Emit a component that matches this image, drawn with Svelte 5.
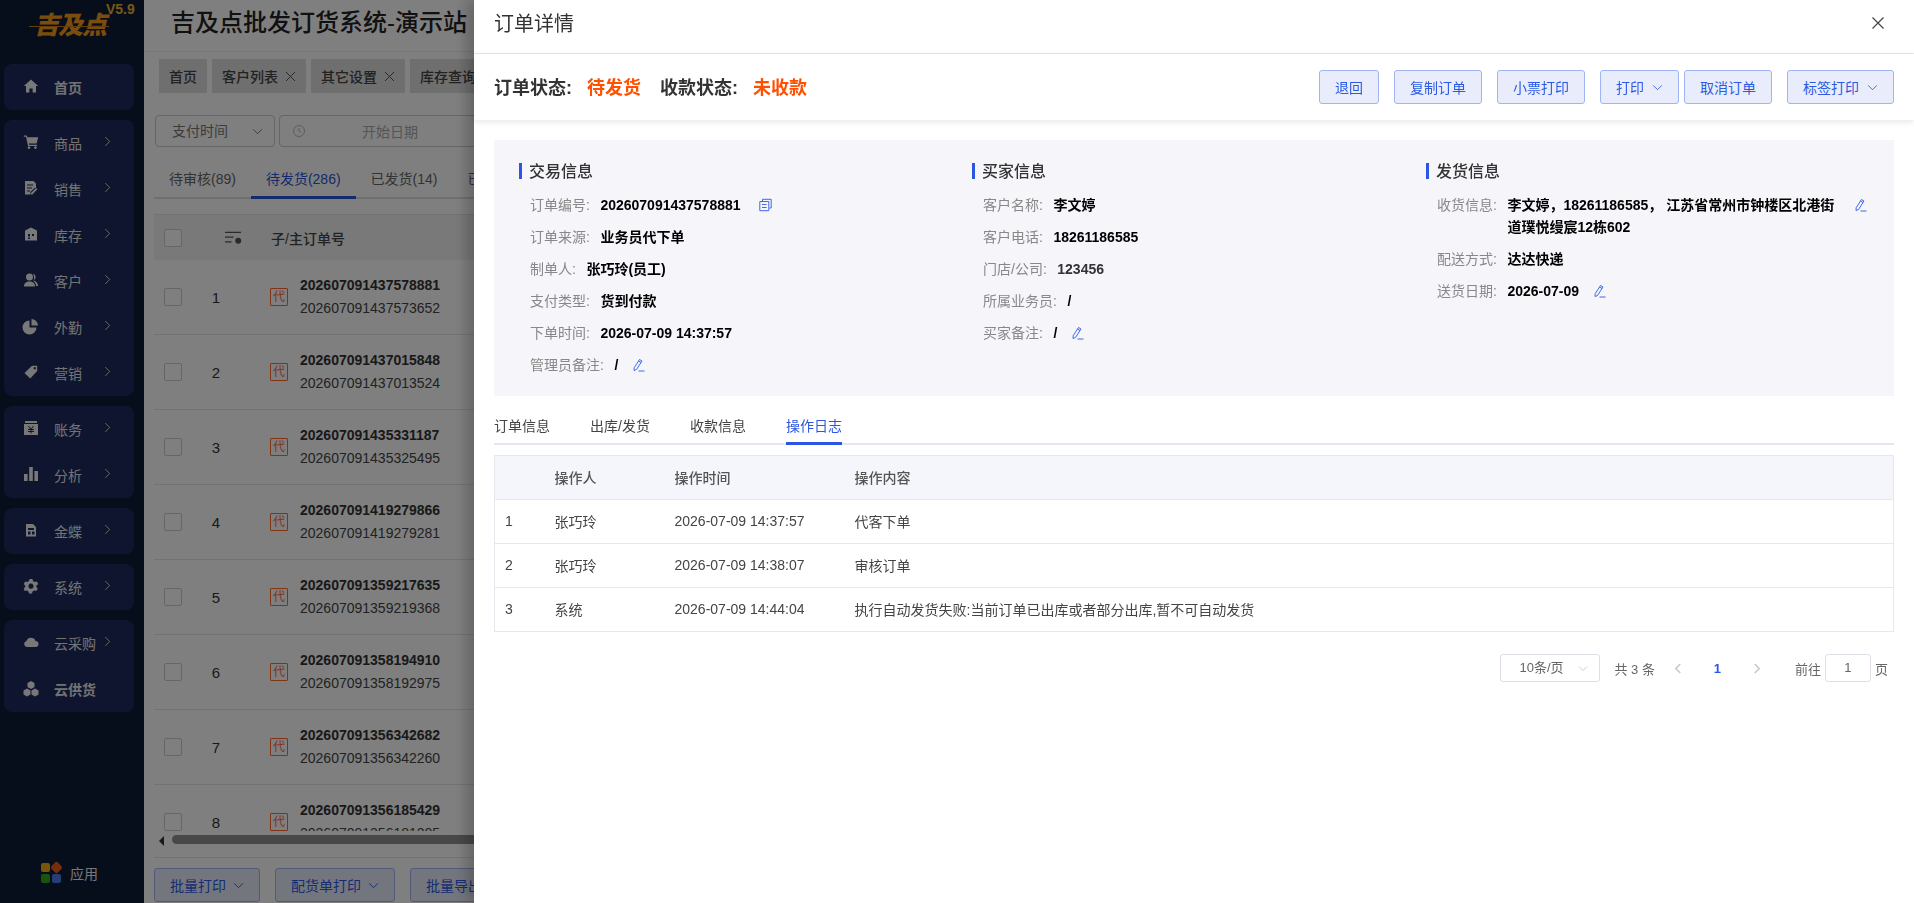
<script>
	const icons = {
		home: 'M8 1.500 15.200 8H13v6.500H9.600v-4H6.400v4H3V8H.8Z',
		cart: 'M.8 1.500h3l.5 1.800h10.900l-1.500 6.200H5.800l.3 1.300h8v1.200H5L3 2.700H.8Z M6 12.200a1.400 1.400 0 1 0 .01 0Z M12.400 12.200a1.400 1.400 0 1 0 .01 0Z',
		doc: 'M2 1h8.500L13 3.500V8h-1.500L7.500 12v2.500H2Z M4 4.500v1h6v-1Z M4 7.500v1h5v-1Z M4 10.500v1h3v-1Z M14.500 9 9.500 14.500h-1.500v-1.500l5-5Z',
		store: 'M8 1.500 14 4.500v10H2v-10Z M5 8v2.500h2V8Z M9 8v2h2V8Z M5 11.500V13h2v-1.500Z',
		users: 'M6.500 1.500a3.500 3.500 0 0 1 0 7 3.500 3.500 0 0 1 0-7Z M1 14.500c0-3.300 2.300-5 5.500-5s5.500 1.700 5.500 5Z M10 1.800a3.300 3.300 0 0 1 .8 6.200l-.8.500c2.800.500 5 2.300 5 5.500h-2c0-2-1-3.500-2.500-4.700.7-2.500 1-5 -.5-7.500Z',
		pie: 'M6.500 2.500v7h7A7 7 0 1 1 6.500 2.500Z M8.500 1a6.500 6.500 0 0 1 6.500 6.500H8.500Z',
		tag: 'M9 1.800h5.200V7L7.200 14.500 1.500 9Z M11.800 3a1.200 1.200 0 1 0 .01 0Z',
		box: 'M2 1h12v2H2Z M1 4h14v11H1Z M6 6l2 2.500L10 6h1L8.800 9H11v1H8.500v1H11v1H8.500v1.500h-1V12H5v-1h2.500v-1H5V9h2.200L5 6Z',
		bars: 'M1 8h3.600v7H1Z M6.200 1h3.600v14H6.200Z M11.400 5h3.600v10h-3.600Z',
		kd: 'M3 2h7l3 3v9.500H3Z M5 6v2h6V6Z M5 9.500v3h2.500v-3Z M9 9.500v3h2.500v-3Z',
		gear: 'M6.500 1h3l.5 2 1.800 1 2-.6 1.500 2.600L13.300 7.500v1.500l1.500 1.500-1.500 2.600-2-.6-1.800 1-.5 2h-3l-.5-2-1.800-1-2 .6L.7 10.500 2.200 9V7.500L.7 6l1.500-2.600 2 .6L6 3Z M8 5.600a2.600 2.600 0 1 0 .01 0Z',
		cloud: 'M4 13a3 3 0 0 1-.6-5.900A4.800 4.800 0 0 1 12.500 7 3 3 0 0 1 12.500 13Z',
		cubes: 'M8 1 11.500 3v4L8 9 4.500 7V3Z M4 8.500 7.500 10.500v4L4 16.500.5 14.500v-4Z M12 8.500 15.500 10.500v4L12 16.500 8.500 14.500v-4Z'
	};

	const groups = [
		[{ icon: 'home', name: '首页', bold: true }],
		[
			{ icon: 'cart', name: '商品', arrow: true },
			{ icon: 'doc', name: '销售', arrow: true },
			{ icon: 'store', name: '库存', arrow: true },
			{ icon: 'users', name: '客户', arrow: true },
			{ icon: 'pie', name: '外勤', arrow: true },
			{ icon: 'tag', name: '营销', arrow: true }
		],
		[
			{ icon: 'box', name: '账务', arrow: true },
			{ icon: 'bars', name: '分析', arrow: true }
		],
		[{ icon: 'kd', name: '金蝶', arrow: true }],
		[{ icon: 'gear', name: '系统', arrow: true }],
		[
			{ icon: 'cloud', name: '云采购', arrow: true },
			{ icon: 'cubes', name: '云供货', bold: true }
		]
	];

	const tags = [
		{ name: '首页' },
		{ name: '客户列表', close: true },
		{ name: '其它设置', close: true },
		{ name: '库存查询', close: true }
	];

	const orders = [
		['202607091437578881', '202607091437573652'],
		['202607091437015848', '202607091437013524'],
		['202607091435331187', '202607091435325495'],
		['202607091419279866', '202607091419279281'],
		['202607091359217635', '202607091359219368'],
		['202607091358194910', '202607091358192975'],
		['202607091356342682', '202607091356342260'],
		['202607091356185429', '202607091356181205']
	];

	const logs = [
		['1', '张巧玲', '2026-07-09 14:37:57', '代客下单'],
		['2', '张巧玲', '2026-07-09 14:38:07', '审核订单'],
		['3', '系统', '2026-07-09 14:44:04', '执行自动发货失败:当前订单已出库或者部分出库,暂不可自动发货']
	];

	const actions = [
		{ text: '退回' },
		{ text: '复制订单' },
		{ text: '小票打印' },
		{ text: '打印', caret: true },
		{ text: '取消订单', tight: true },
		{ text: '标签打印', caret: true }
	];

	const info = [
		{
			title: '交易信息',
			rows: [
				{ k: '订单编号:', v: '202607091437578881', copy: true },
				{ k: '订单来源:', v: '业务员代下单' },
				{ k: '制单人:', v: '张巧玲(员工)' },
				{ k: '支付类型:', v: '货到付款' },
				{ k: '下单时间:', v: '2026-07-09 14:37:57' },
				{ k: '管理员备注:', v: '/', edit: true }
			]
		},
		{
			title: '买家信息',
			rows: [
				{ k: '客户名称:', v: '李文婷' },
				{ k: '客户电话:', v: '18261186585' },
				{ k: '门店/公司:', v: '123456', dim: true },
				{ k: '所属业务员:', v: '/' },
				{ k: '买家备注:', v: '/', edit: true }
			]
		},
		{
			title: '发货信息',
			rows: [
				{ k: '收货信息:', v: '李文婷，18261186585， 江苏省常州市钟楼区北港街道璞悦缦宸12栋602', wide: true, edit: true },
				{ k: '配送方式:', v: '达达快递' },
				{ k: '送货日期:', v: '2026-07-09', edit: true }
			]
		}
	];

	const detailTabs = ['订单信息', '出库/发货', '收款信息', '操作日志'];
</script>

<div class="page">
	<aside class="side">
		<div class="logo">
			<span class="logo-mark">吉及点</span>
			<span class="logo-rule"></span>
			<span class="logo-ver">V5.9</span>
		</div>
		{#each groups as group}
			<div class="group">
				{#each group as item}
					<div class="item" class:bold={item.bold}>
						<svg class="item-icon" viewBox="1 1 14 14"><path fill-rule="evenodd" d={icons[item.icon]} /></svg>
						<span class="item-name">{item.name}</span>
						{#if item.arrow}
							<svg class="item-arrow" viewBox="0 0 8 12"><path d="M1.500 1 6.500 6 1.500 11" /></svg>
						{/if}
					</div>
				{/each}
			</div>
		{/each}
		<div class="apps">
			<span class="apps-grid">
				<i class="a1"></i><i class="a2"></i><i class="a3"></i><i class="a4"></i>
			</span>
			应用
		</div>
	</aside>

	<main class="main">
		<header class="head">吉及点批发订货系统-演示站</header>
		<div class="tags">
			{#each tags as t}
				<span class="tag">
					{t.name}
					{#if t.close}
						<svg class="tag-x" viewBox="0 0 11 11"><path d="M1 1 10 10M10 1 1 10" /></svg>
					{/if}
				</span>
			{/each}
		</div>
		<div class="filters">
			<div class="select">支付时间
				<svg class="caret" viewBox="0 0 12 8"><path d="M1 1.500 6 6.500 11 1.500" /></svg>
			</div>
			<div class="range">
				<svg class="clock" viewBox="0 0 14 14"><circle cx="7" cy="7" r="5.500" /><path d="M7 4v3.200l2 1" /></svg>
				<span>开始日期</span>
				<em>至</em>
			</div>
		</div>
		<div class="tabs">
			<span>待审核(89)</span>
			<span class="on">待发货(286)</span>
			<span>已发货(14)</span>
			<span>已完成</span>
		</div>
		<div class="grid-wrap">
			<div class="grid-head">
				<span class="check"></span>
				<svg class="sorter" viewBox="0 0 18 14"><path d="M0 1h17M0 6h9M0 11h7" /><circle cx="14" cy="10" r="2.500" /></svg>
				<span class="grid-title">子/主订单号</span>
			</div>
			{#each orders as order, i}
				<div class="grid-row">
					<span class="check"></span>
					<span class="num">{i + 1}</span>
					<span class="dai">代</span>
					<div class="nos">
						<strong>{order[0]}</strong>
						<span>{order[1]}</span>
					</div>
				</div>
			{/each}
		</div>
		<div class="hscroll">
			<span class="hscroll-left"></span>
			<span class="hscroll-thumb"></span>
		</div>
		<div class="batch">
			<span class="batch-btn">批量打印 <svg class="caret" viewBox="0 0 12 8"><path d="M1 1.500 6 6.500 11 1.500" /></svg></span>
			<span class="batch-btn">配货单打印 <svg class="caret" viewBox="0 0 12 8"><path d="M1 1.500 6 6.500 11 1.500" /></svg></span>
			<span class="batch-btn">批量导出</span>
		</div>
	</main>

	<div class="mask"></div>

	<section class="drawer">
		<div class="drawer-head">
			<h2>订单详情</h2>
			<svg class="close" viewBox="0 0 14 14"><path d="M1.500 1.500 12.500 12.500M12.500 1.500 1.500 12.500" /></svg>
		</div>
		<div class="status">
			<span class="status-k">订单状态:</span>
			<span class="status-v">待发货</span>
			<span class="status-k">收款状态:</span>
			<span class="status-v">未收款</span>
			<div class="actions">
				{#each actions as a}
					<button class="act" class:tight={a.tight}>
						{a.text}
						{#if a.caret}
							<svg class="act-caret" viewBox="0 0 12 8"><path d="M1 1.500 6 6.500 11 1.500" /></svg>
						{/if}
					</button>
				{/each}
			</div>
		</div>

		<div class="body">
			<div class="panel">
				{#each info as col}
					<div class="col">
						<h3>{col.title}</h3>
						{#each col.rows as r}
							<div class="row">
								<span class="k">{r.k}</span>
								<span class="v" class:wide={r.wide} class:dim={r.dim}>{r.v}</span>
								{#if r.copy}
									<svg class="mini copy" viewBox="0 0 13 13"><path d="M3.500 2.500V.8h8.700v8.700h-1.700" /><path d="M.8 3h9v9.200h-9ZM3 6h4.600M3 9h4.600" /></svg>
								{/if}
								{#if r.edit}
									<svg class="mini edit" class:far={r.wide} viewBox="0 0 13 14"><path d="M7.500 1.500 10 3 4.500 11.500 2 12.500l.2-2.800ZM6.500 3 9 4.500M6.500 13h6" /></svg>
								{/if}
							</div>
						{/each}
					</div>
				{/each}
			</div>

			<div class="dtabs">
				{#each detailTabs as t, i}
					<span class="dtab" class:active={i === 3}>{t}</span>
				{/each}
			</div>

			<table class="log">
				<colgroup>
					<col class="c1" /><col class="c2" /><col class="c3" /><col />
				</colgroup>
				<thead>
					<tr><th></th><th>操作人</th><th>操作时间</th><th>操作内容</th></tr>
				</thead>
				<tbody>
					{#each logs as l}
						<tr>
							{#each l as c}<td>{c}</td>{/each}
						</tr>
					{/each}
				</tbody>
			</table>

			<div class="pager">
				<div class="size">10条/页
					<svg class="size-caret" viewBox="0 0 12 8"><path d="M1 1.500 6 6.500 11 1.500" /></svg>
				</div>
				<span class="total">共 3 条</span>
				<svg class="nav" viewBox="0 0 8 12"><path d="M6.500 1 1.500 6 6.500 11" /></svg>
				<span class="cur">1</span>
				<svg class="nav" viewBox="0 0 8 12"><path d="M1.500 1 6.500 6 1.500 11" /></svg>
				<span class="goto">前往</span>
				<span class="jump">1</span>
				<span class="unit">页</span>
			</div>
		</div>
	</section>
</div>

<style>
	:global(body) {
		margin: 0;
		overflow: hidden;
		font-family: 'Liberation Sans', 'Noto Sans CJK SC', sans-serif;
		font-size: 14px;
		color: #333;
	}

	.page {
		display: flex;
		width: 1914px;
		height: 903px;
		overflow: hidden;
		background: #fff;
	}

	/* sidebar */
	.side {
		flex: 0 0 144px;
		display: flex;
		flex-direction: column;
		background: #0d1a36;
		height: 903px;
	}
	.logo {
		position: relative;
		height: 64px;
		flex: none;
	}
	.logo-mark {
		position: absolute;
		left: 34px;
		top: 8px;
		font-size: 25px;
		line-height: 34px;
		font-weight: 900;
		font-style: italic;
		letter-spacing: -1px;
		color: #f59a18;
	}
	.logo-rule {
		position: absolute;
		left: 29px;
		top: 26px;
		width: 80px;
		height: 1px;
		background: #c67a14;
	}
	.logo-ver {
		position: absolute;
		left: 106px;
		top: 1px;
		font-size: 14px;
		font-weight: 700;
		color: #e8b52a;
	}
	.group {
		margin: 0 10px 10px 4px;
		background: #1e2a5c;
		border-radius: 8px;
	}
	.item {
		display: flex;
		align-items: center;
		height: 46px;
		padding-left: 20px;
		color: #e6e6e6;
		position: relative;
	}
	.item.bold {
		font-weight: 700;
	}
	.item-icon {
		width: 14px;
		height: 14px;
		fill: #f0f0f0;
		margin-top: -3px;
		overflow: visible;
	}
	.item-name {
		margin-left: 16px;
	}
	.item-arrow {
		position: absolute;
		left: 100px;
		top: 16px;
		width: 7px;
		height: 11px;
		fill: none;
		stroke: #ddd;
		stroke-width: 1.100;
	}
	.apps {
		margin-top: auto;
		margin-bottom: 20px;
		display: flex;
		align-items: center;
		padding-left: 41px;
		gap: 9px;
		color: #eee;
	}
	.apps-grid {
		display: grid;
		grid-template-columns: 9px 9px;
		gap: 2px;
	}
	.apps-grid i {
		height: 9px;
		border-radius: 2px;
	}
	.a1 { background: #f0a818; }
	.a2 { background: #f05a14; transform: rotate(45deg); }
	.a3 { background: #2fa81a; }
	.a4 { background: #4a7fe8; }

	/* page behind the drawer */
	.main {
		flex: 1;
		min-width: 0;
		height: 903px;
		overflow: hidden;
		padding-left: 10px;
	}
	.head {
		height: 51px;
		margin-left: -10px;
		padding-left: 27px;
		border-bottom: 1px solid #eee;
		font-size: 24px;
		font-weight: 500;
		line-height: 46px;
		color: #222;
	}
	.tags {
		display: flex;
		gap: 5px;
		padding: 7px 0 0 5px;
	}
	.tag {
		display: flex;
		align-items: center;
		gap: 7px;
		height: 34px;
		padding: 0 10px;
		background: #dedede;
		color: #444;
		font-weight: 500;
		white-space: nowrap;
	}
	.tag-x {
		width: 11px;
		height: 11px;
		fill: none;
		stroke: #555;
	}
	.filters {
		display: flex;
		gap: 4px;
		margin: 22px 0 0 1px;
	}
	.select {
		box-sizing: border-box;
		width: 120px;
		height: 32px;
		padding-left: 16px;
		line-height: 30px;
		border: 1px solid #ccc;
		border-radius: 4px;
		color: #777;
		position: relative;
	}
	.select .caret {
		position: absolute;
		right: 11px;
		top: 12px;
	}
	.caret {
		width: 11px;
		height: 7px;
		fill: none;
		stroke: currentColor;
		stroke-width: 1.100;
	}
	.range {
		box-sizing: border-box;
		display: flex;
		align-items: center;
		width: 500px;
		height: 32px;
		border: 1px solid #ccc;
		border-radius: 4px;
		padding-left: 12px;
		color: #aaa;
	}
	.clock {
		width: 14px;
		height: 14px;
		fill: none;
		stroke: #bbb;
	}
	.range span {
		margin-left: 56px;
	}
	.range em {
		font-style: normal;
		color: #555;
		margin-left: 56px;
	}
	.tabs {
		display: flex;
		margin-top: 17px;
		height: 35px;
		box-sizing: border-box;
		border-bottom: 2px solid #dcdfe6;
		color: #666;
	}
	.tabs span {
		padding: 0 15px;
		line-height: 30px;
		height: 35px;
		box-sizing: border-box;
		white-space: nowrap;
	}
	.tabs .on {
		color: #2a55d6;
		border-bottom: 3px solid #2a55d6;
	}
	.grid-wrap {
		margin-top: 15px;
		height: 617px;
		overflow: hidden;
	}
	.grid-head {
		display: flex;
		align-items: center;
		height: 46px;
		padding-left: 10px;
		background: #f2f2f4;
		border-top: 1px solid #e4e4e4;
		box-sizing: border-box;
		font-weight: 500;
		color: #444;
	}
	.sorter {
		width: 17px;
		height: 14px;
		margin-left: 43px;
		fill: #555;
		stroke: #555;
		stroke-width: 1.300;
	}
	.grid-title {
		margin-left: 29px;
	}
	.check {
		box-sizing: border-box;
		flex: none;
		width: 18px;
		height: 18px;
		background: #fff;
		border: 1px solid #ccc;
		border-radius: 2px;
	}
	.grid-row {
		display: flex;
		align-items: center;
		height: 75px;
		box-sizing: border-box;
		padding-left: 10px;
		border-bottom: 1px solid #e6e6e6;
	}
	.num {
		width: 16px;
		margin-left: 26px;
		text-align: center;
		font-size: 15px;
	}
	.dai {
		box-sizing: border-box;
		width: 18px;
		height: 18px;
		margin-left: 46px;
		border: 1px solid #ff6a2a;
		border-radius: 1px;
		color: #ff6a2a;
		font-size: 12px;
		line-height: 16px;
		text-align: center;
	}
	.nos {
		display: flex;
		flex-direction: column;
		gap: 6px;
		margin-left: 10px;
		line-height: 17px;
		padding-left: 2px;
	}
	.nos strong {
		font-weight: 700;
	}
	.nos span {
		color: #444;
	}
	.hscroll {
		position: relative;
		height: 26px;
		border-bottom: 1px solid #e6e6e6;
	}
	.hscroll-left {
		position: absolute;
		left: 5px;
		top: 5px;
		border: 5px solid transparent;
		border-right: 5px solid #333;
		border-left: 0;
	}
	.hscroll-thumb {
		position: absolute;
		left: 18px;
		top: 4px;
		right: 0;
		height: 9px;
		background: #909090;
		border-radius: 5px;
	}
	.batch {
		display: flex;
		gap: 15px;
		margin-top: 10px;
	}
	.batch-btn {
		box-sizing: border-box;
		display: flex;
		align-items: center;
		justify-content: center;
		gap: 7px;
		height: 34px;
		padding: 0 15px;
		background: #e9edfb;
		border: 1px solid #a0b4f5;
		border-radius: 3px;
		color: #2b5ae5;
		white-space: nowrap;
	}

	.mask {
		position: fixed;
		inset: 0;
		background: rgba(0, 0, 0, 0.5);
	}

	/* drawer */
	.drawer {
		position: fixed;
		top: 0;
		right: 0;
		width: 1440px;
		height: 903px;
		background: #fff;
		box-shadow: -8px 0 12px rgba(0, 0, 0, 0.2);
	}
	.drawer-head {
		box-sizing: border-box;
		height: 54px;
		display: flex;
		align-items: center;
		justify-content: space-between;
		padding: 0 29px 8px 20px;
		border-bottom: 1px solid #e4e6f0;
	}
	.drawer-head h2 {
		margin: 0;
		font-size: 20px;
		font-weight: 400;
		color: #333;
	}
	.close {
		width: 14px;
		height: 14px;
		fill: none;
		stroke: #444;
		stroke-width: 1.200;
	}
	.status {
		position: relative;
		height: 66px;
		display: flex;
		align-items: center;
		padding: 0 20px;
		box-shadow: 0 2px 6px rgba(0, 0, 0, 0.1);
		font-size: 18px;
		font-weight: 700;
	}
	.status-k {
		color: #333;
		margin: 0 15px 2px 0;
	}
	.status-v {
		color: #ff5000;
		margin: 0 19px 2px 0;
	}
	.actions {
		margin-left: auto;
		display: flex;
		gap: 15px;
	}
	.act {
		box-sizing: border-box;
		display: flex;
		align-items: center;
		justify-content: center;
		gap: 8px;
		height: 34px;
		padding: 0 15px;
		background: #e9edfb;
		border: 1px solid #a0b4f5;
		border-radius: 3px;
		color: #2b5ae5;
		font: 14px 'Liberation Sans', 'Noto Sans CJK SC', sans-serif;
		white-space: nowrap;
	}
	.act.tight {
		margin-left: -10px;
	}
	.act-caret {
		width: 11px;
		height: 7px;
		fill: none;
		stroke: #2b5ae5;
	}
	.body {
		padding: 20px 20px 0;
	}
	.panel {
		box-sizing: border-box;
		height: 256px;
		display: grid;
		grid-template-columns: 453px 454px 1fr;
		padding: 21px 15px 0 25px;
		background: #f5f5fa;
	}
	.col h3 {
		margin: 2px 0 15px;
		padding-left: 7px;
		border-left: 3px solid #2b55e5;
		height: 16px;
		font-size: 16px;
		font-weight: 500;
		line-height: 18px;
		color: #333;
	}
	.row {
		display: flex;
		align-items: flex-start;
		margin: 0 0 10px 11px;
		line-height: 22px;
	}
	.k {
		color: #888;
		margin-right: 10.500px;
		white-space: nowrap;
	}
	.v {
		color: #000;
		font-weight: 700;
	}
	.v.wide {
		width: 330px;
	}
	.v.dim {
		color: #333;
	}
	.mini {
		flex: none;
		width: 13px;
		height: 14px;
		margin: 4px 0 0 14px;
		fill: none;
		stroke: #2b5ae5;
		stroke-width: 0.900;
	}
	.mini.copy {
		margin-left: 18px;
	}
	.mini.far {
		margin-left: 17px;
	}
	.dtabs {
		display: flex;
		height: 49px;
		box-sizing: border-box;
		border-bottom: 2px solid #e4e7ef;
	}
	.dtab {
		height: 47px;
		line-height: 60px;
		margin-right: 40px;
		white-space: nowrap;
		color: #444;
	}
	.dtab.active {
		color: #2b55e5;
		box-shadow: 0 2px 0 #2b55e5, inset 0 -1px 0 #2b55e5;
	}
	.log {
		width: 100%;
		table-layout: fixed;
		border-collapse: collapse;
		margin-top: 10px;
		border: 1px solid #e6e8ee;
	}
	.c1 { width: 50px; }
	.c2 { width: 120px; }
	.c3 { width: 180px; }
	.log th {
		height: 44px;
		padding: 0 0 2px 10px;
		box-sizing: border-box;
		background: #f5f6fb;
		border-bottom: 1px solid #e6e8ee;
		font-weight: 500;
		text-align: left;
		color: #555;
	}
	.log td {
		height: 44px;
		padding: 0 0 2px 10px;
		box-sizing: border-box;
		border-bottom: 1px solid #e6e8ee;
		color: #444;
		white-space: nowrap;
	}
	.pager {
		display: flex;
		align-items: center;
		justify-content: flex-end;
		margin: 22px 6px 0 0;
		font-size: 13px;
		color: #666;
	}
	.size {
		box-sizing: border-box;
		position: relative;
		width: 100px;
		height: 28px;
		line-height: 26px;
		padding-left: 19px;
		border: 1px solid #dcdfe6;
		border-radius: 3px;
	}
	.size-caret {
		position: absolute;
		right: 11px;
		top: 10px;
		width: 10px;
		height: 7px;
		fill: none;
		stroke: #c0c4cc;
	}
	.total {
		margin: 0 19px 0 15px;
		white-space: nowrap;
	}
	.nav {
		width: 8px;
		height: 11px;
		fill: none;
		stroke: #c0c4cc;
		stroke-width: 1.500;
	}
	.cur {
		width: 71px;
		text-align: center;
		font-weight: 700;
		color: #2b55e5;
	}
	.goto {
		margin-left: 34px;
	}
	.jump {
		box-sizing: border-box;
		width: 46px;
		height: 28px;
		margin: 0 4px;
		line-height: 26px;
		text-align: center;
		border: 1px solid #dcdfe6;
		border-radius: 3px;
	}
</style>
